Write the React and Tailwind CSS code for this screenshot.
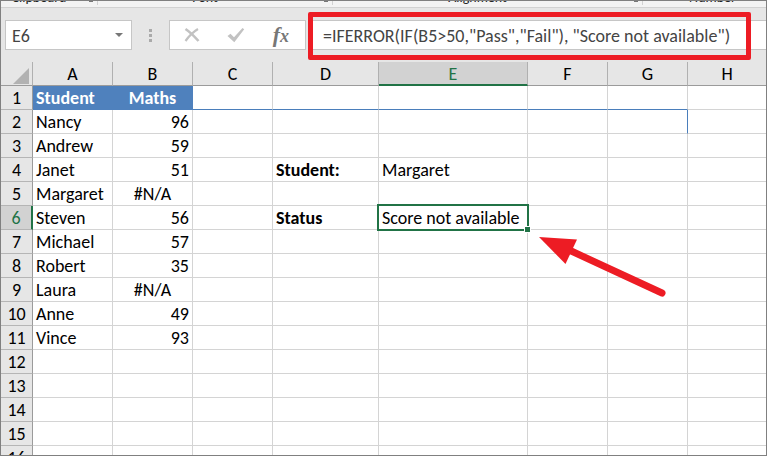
// src/App.jsx
import { useState } from "react";

const columns = [
  { id: "A", width: "w-[80px]" },
  { id: "B", width: "w-[80px]" },
  { id: "C", width: "w-[80px]" },
  { id: "D", width: "w-[106px]" },
  { id: "E", width: "w-[149px]" },
  { id: "F", width: "w-[80px]" },
  { id: "G", width: "w-[80px]" },
  { id: "H", width: "" },
];

const rows = Array.from({ length: 16 }, (_, i) => i + 1);

const cells = {
  A1: "Student", B1: "Maths",
  A2: "Nancy", B2: 96,
  A3: "Andrew", B3: 59,
  A4: "Janet", B4: 51, D4: "Student:", E4: "Margaret",
  A5: "Margaret", B5: "#N/A",
  A6: "Steven", B6: 56, D6: "Status", E6: "Score not available",
  A7: "Michael", B7: 57,
  A8: "Robert", B8: 35,
  A9: "Laura", B9: "#N/A",
  A10: "Anne", B10: 49,
  A11: "Vince", B11: 93,
};

const ribbonGroups = [
  { name: "Clipboard", width: "w-[97px]" },
  { name: "Font", width: "w-[235px]" },
  { name: "Alignment", width: "w-[310px]" },
  { name: "Number", width: "w-[160px]" },
];

function cellClass(col, row) {
  const value = cells[col + row];
  let cls = "h-6 border-b pt-[2px] leading-[21px] whitespace-nowrap ";

  if (col !== "H") cls += "border-r ";
  if (row === 1 && (col === "A" || col === "B")) {
    cls += "border-[#4f81bd] bg-[#4f81bd] font-bold text-white ";
  } else if (row === 1 && col !== "H") {
    cls += "border-r-[#d4d4d4] border-b-[#4a7ebb] bg-white ";
  } else if (row === 2 && col === "G") {
    cls += "border-r-[#4a7ebb] border-b-[#d4d4d4] bg-white ";
  } else {
    cls += "border-[#d4d4d4] bg-white ";
  }
  if (col === "D") cls += "font-bold ";
  if (col + row === "E6") cls += "relative ";

  if (typeof value === "number") return cls + "pr-[3px] text-right";
  if (col === "B") return cls + "text-center";
  return cls + "pl-[3px] text-left";
}

function Ribbon() {
  return (
    <div className="flex h-[7px] shrink-0 items-end overflow-hidden border-b border-[#d2d2d2] bg-[#f3f3f3] pb-[2px] text-[14px] leading-[15px] text-[#222]">
      {ribbonGroups.map((g) => (
        <div key={g.name} className={`flex shrink-0 border-r border-[#d2d2d2] ${g.width}`}>
          <span className="flex-1 text-center">{g.name}</span>
          <span className="mr-1 mb-[3px] ml-3 h-1 w-1 self-end bg-[#777]" />
        </div>
      ))}
    </div>
  );
}

function FormulaBar() {
  const [nameBox, setNameBox] = useState("E6");
  const [formula, setFormula] = useState(
    '=IFERROR(IF(B5>50,"Pass","Fail"), "Score not available")'
  );

  return (
    <div className="flex shrink-0 items-center py-3 pl-1 text-[#444]">
      <div className="flex h-[30px] w-[127px] items-center border border-[#c6c6c6] bg-white">
        <input
          type="text"
          aria-label="Name box"
          value={nameBox}
          onChange={(e) => setNameBox(e.target.value)}
          className="w-full min-w-0 flex-1 pt-[2px] pl-1.5 outline-none"
        />
        <button type="button" aria-label="Open name list" className="px-2">
          <svg width="8" height="4" viewBox="0 0 8 4">
            <path d="M0 0h8L4 4z" fill="#777" />
          </svg>
        </button>
      </div>

      <div className="flex w-[37px] flex-col items-center gap-[2px]">
        <span className="h-[3px] w-[3px] bg-[#aaa]" />
        <span className="h-[3px] w-[3px] bg-[#aaa]" />
        <span className="h-[3px] w-[3px] bg-[#aaa]" />
      </div>

      <div className="flex h-[30px] w-[137px] items-center justify-between border border-[#c6c6c6] bg-white pr-4 pl-[14px]">
        <button type="button" aria-label="Cancel">
          <svg width="16" height="16" viewBox="0 0 16 16" fill="none" stroke="#c2c2c2">
            <path d="M1.5 2C6 5 10 9 14.5 14" strokeWidth="2.6" />
            <path d="M14 2C9 5 5 9 1.5 14" strokeWidth="2.2" />
          </svg>
        </button>
        <button type="button" aria-label="Enter">
          <svg width="18" height="16" viewBox="0 0 18 16">
            <path d="M0.500 9l3-2.300L7 10.300 15.500 1l1.700 1.300L7.300 15.300z" fill="#c2c2c2" />
          </svg>
        </button>
        <button
          type="button"
          aria-label="Insert function"
          className="font-['Liberation_Serif',serif] text-[22px] leading-6 font-bold text-[#777] italic"
        >
          f<span className="text-[18px]">x</span>
        </button>
      </div>

      <div className="relative ml-[3px] h-[30px] flex-1 border-y border-l border-[#c6c6c6] bg-white">
        <input
          type="text"
          aria-label="Formula bar"
          value={formula}
          onChange={(e) => setFormula(e.target.value)}
          className="h-full w-full pt-[2px] pl-[13px] outline-none"
        />
        <div className="pointer-events-none absolute -top-[9px] right-[15px] -bottom-[11px] -left-[2px] rounded-[2px] border-[5px] border-[#ed1c24]" />
      </div>
    </div>
  );
}

function Selection() {
  return (
    <>
      <div className="pointer-events-none absolute -inset-[2px] border-2 border-[#217346]" />
      <div className="absolute -right-[4px] -bottom-[4px] h-[7px] w-[7px] border border-white bg-[#217346]" />
      <svg
        className="pointer-events-none absolute top-full left-full"
        width="142"
        height="72"
        viewBox="0 0 142 72"
      >
        <path d="M42 21L135 64" stroke="#ed1c24" strokeWidth="7" strokeLinecap="round" />
        <path d="M12 8L50 10.500L38.500 35z" fill="#ed1c24" />
      </svg>
    </>
  );
}

function Sheet() {
  return (
    <table className="w-full table-fixed border-separate border-spacing-0 text-black">
      <colgroup>
        <col className="w-[32px]" />
        {columns.map((c) => (
          <col key={c.id} className={c.width} />
        ))}
      </colgroup>
      <thead>
        <tr>
          <th aria-label="Select all" className="h-6 border-r border-b border-r-[#b0b0b0] border-b-[#9b9b9b] p-0">
            <svg className="mt-1 mr-[3px] ml-auto" width="16" height="16" viewBox="0 0 16 16">
              <path d="M16 0v16H0z" fill="#b2b2b2" />
            </svg>
          </th>
          {columns.map((c) => (
            <th
              key={c.id}
              className={
                c.id === "E"
                  ? "h-6 border-r border-b-2 border-r-[#b0b0b0] border-b-[#217346] bg-[#d2d2d2] pt-[2px] leading-5 font-normal text-[#217346]"
                  : "h-6 border-r border-b border-r-[#b0b0b0] border-b-[#9b9b9b] pt-[2px] leading-[21px] font-normal last:border-r-0"
              }
            >
              {c.id}
            </th>
          ))}
        </tr>
      </thead>
      <tbody>
        {rows.map((row) => (
          <tr key={row}>
            <th
              className={
                row === 6
                  ? "h-6 border-r-2 border-b border-r-[#217346] border-b-[#b5b5b5] bg-[#d2d2d2] pt-[2px] leading-[21px] font-normal text-[#217346]"
                  : "h-6 border-r border-b border-r-[#9b9b9b] border-b-[#b5b5b5] pt-[2px] leading-[21px] font-normal"
              }
            >
              {row}
            </th>
            {columns.map((c) => (
              <td key={c.id} className={cellClass(c.id, row)}>
                {cells[c.id + row]}
                {c.id + row === "E6" && <Selection />}
              </td>
            ))}
          </tr>
        ))}
      </tbody>
    </table>
  );
}

export default function App() {
  return (
    <div className="flex h-screen flex-col overflow-hidden border border-[#808080] bg-[#e6e6e6] font-['Carlito','Lato',sans-serif] text-[18px]">
      <Ribbon />
      <FormulaBar />
      <div className="min-h-0 flex-1 overflow-hidden">
        <Sheet />
      </div>
    </div>
  );
}
